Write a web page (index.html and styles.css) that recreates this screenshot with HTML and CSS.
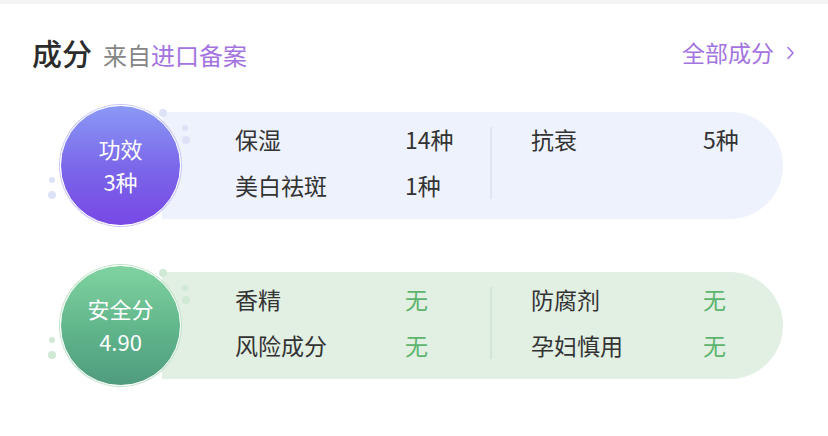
FILE: index.html
```html
<!DOCTYPE html>
<html lang="zh">
<head>
<meta charset="utf-8">
<link rel="stylesheet" href="styles.css">
</head>
<body>
<div class="topbar"></div>
<section class="panel">
  <header class="head">
    <div class="title"><span class="main">成分</span><span class="from">来自</span><span class="src">进口备案</span></div>
    <div class="all">全部成分<svg class="chev" width="9" height="14" viewBox="0 0 9 14"><path d="M2 1.5 L7 7 L2 12.5" fill="none" stroke="#a374e0" stroke-width="1.6" stroke-linecap="round" stroke-linejoin="round"/></svg></div>
  </header>

  <div class="card effect">
    <span class="dot d1"></span><span class="dot d2"></span><span class="dot d3"></span><span class="dot d4"></span><span class="dot d5"></span>
    <div class="badge"><div>功效</div><div>3种</div></div>
    <div class="pill">
      <div class="col left">
        <div class="row"><span class="label">保湿</span><span class="val">14种</span></div>
        <div class="row"><span class="label">美白祛斑</span><span class="val">1种</span></div>
      </div>
      <div class="divider"></div>
      <div class="col right">
        <div class="row"><span class="label">抗衰</span><span class="val">5种</span></div>
        <div class="row"><span class="label"></span><span class="val"></span></div>
      </div>
    </div>
  </div>

  <div class="card safe">
    <span class="dot d1"></span><span class="dot d2"></span><span class="dot d3"></span><span class="dot d4"></span><span class="dot d5"></span>
    <div class="badge"><div>安全分</div><div>4.90</div></div>
    <div class="pill">
      <div class="col left">
        <div class="row"><span class="label">香精</span><span class="val ok">无</span></div>
        <div class="row"><span class="label">风险成分</span><span class="val ok">无</span></div>
      </div>
      <div class="divider"></div>
      <div class="col right">
        <div class="row"><span class="label">防腐剂</span><span class="val ok">无</span></div>
        <div class="row"><span class="label">孕妇慎用</span><span class="val ok">无</span></div>
      </div>
    </div>
  </div>
</section>
</body>
</html>
```
FILE: styles.css
```css
* { box-sizing: border-box; }
html, body { margin: 0; padding: 0; background: #fff; }
body { font-family: "Noto Sans CJK SC", "Noto Sans", sans-serif; color: #333; width: 828px; height: 436px; overflow: hidden; }
.topbar { height: 4px; background: #f4f4f4; }
.panel { padding: 0 32px 0 32px; }
.head { display: flex; justify-content: space-between; align-items: center; height: 92px; padding-top: 4px; }
.title { display: flex; align-items: baseline; }
.main { font-size: 30px; font-weight: 500; color: #2c2c2c; margin-right: 11px; }
.from { font-size: 24px; color: #858585; }
.src { font-size: 24px; color: #a374e0; }
.all { font-size: 23px; color: #a374e0; display: flex; align-items: center; margin-right: 1px; }
.chev { margin-left: 12px; margin-top: 1px; }

.card { position: relative; display: flex; align-items: center; margin-left: 28px; width: 723px; height: 121px; }
.card.effect { margin-top: 9px; }
.card.safe { margin-top: 39px; }
.badge { position: relative; z-index: 2; width: 121px; height: 121px; border-radius: 50%; flex: none; display: flex; flex-direction: column; align-items: center; justify-content: center; color: #fff; font-size: 22px; line-height: 33px; padding-bottom: 2px; border: 1.5px solid #fff; }
.effect .badge { background: linear-gradient(180deg, #8a99f6 0%, #7a64e9 55%, #7848e6 100%); box-shadow: 0 0 0 1px #c8c6f5; }
.safe .badge { background: linear-gradient(180deg, #80d3a0 0%, #5fb48a 55%, #4f9c7e 100%); box-shadow: 0 0 0 1px #bfe3c8; }
.pill { margin-left: -19px; height: 107px; width: 621px; border-radius: 0 54px 54px 0; display: flex; align-items: center; padding-left: 73px; padding-bottom: 5px; font-size: 23px; color: #333; }
.effect .pill { background: #eef2fd; }
.safe .pill { background: #e2efe3; }
.col { display: flex; flex-direction: column; gap: 13px; margin-top: -2px; }
.row { display: flex; height: 33px; align-items: center; }
.left .label { width: 170px; }
.left .val { width: 85px; }
.right { padding-left: 39px; }
.right .label { width: 172px; }
.divider { width: 2px; height: 72px; }
.effect .divider { background: #dfe5f3; }
.safe .divider { background: #d3e6d5; }
.val.ok { color: #5cb46d; }

.dot { position: absolute; border-radius: 50%; z-index: 1; }
.effect .dot { background: #dde2f7; }
.safe .dot { background: #cfe9d5; }
.d1 { width: 8px; height: 8px; left: 99px; top: 4px; }
.d2 { width: 6px; height: 6px; left: 122px; top: 20px; }
.d3 { width: 8px; height: 8px; left: 122px; top: 31px; }
.d4 { width: 6px; height: 6px; left: -11px; top: 72px; }
.d5 { width: 8px; height: 8px; left: -12px; top: 86px; }
```
